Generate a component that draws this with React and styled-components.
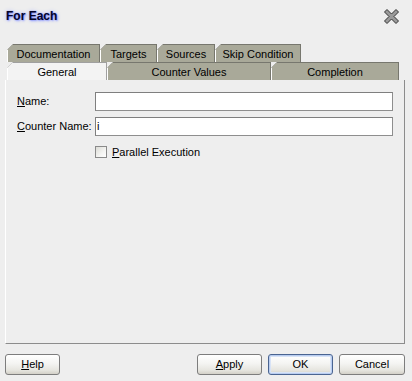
import React from "react";
import styled, { createGlobalStyle } from "styled-components";

const Global = createGlobalStyle`
  html, body { margin: 0; padding: 0; background: #eeeeee; }
  body { font-family: "Liberation Sans", Arial, sans-serif; font-size: 11px; color: #000; }
`;

const Dialog = styled.div`
  width: 412px;
  height: 381px;
  background: #eeeeee;
  display: flex;
  flex-direction: column;
  box-sizing: border-box;
`;

const TitleBar = styled.div`
  height: 44px;
  box-sizing: border-box;
  padding: 9px 13px 0 6px;
  display: flex;
  justify-content: space-between;
  align-items: flex-start;
`;

const Title = styled.div`
  font-size: 12px;
  font-weight: bold;
  color: #06062a;
  line-height: 14px;
  text-shadow: 0 0 1px #6f7cf0, 1px 1px 2px #8f9cff, 0 0 4px #b4bcff;
`;

const CloseBtn = styled.div`
  width: 15px;
  height: 15px;
  display: flex;
`;

const TabRows = styled.div`
  display: flex;
  flex-direction: column;
  padding-left: 7px;
`;

const TabRow = styled.div`
  display: flex;
  height: 18px;
`;

const TabOuter = styled.div`
  width: ${(p) => p.$w}px;
  height: 18px;
  box-sizing: border-box;
  padding: 1px 1px 0 0;
  background: ${(p) => (p.$active ? "#a0a0a0" : "#77776e")};
  clip-path: polygon(6px 0, 100% 0, 100% 100%, 0 100%, 0 6px);
  flex: none;
`;

const TabInner = styled.div`
  height: 100%;
  box-sizing: border-box;
  border-left: 1px solid #ffffff;
  background: ${(p) => (p.$active ? "#f3f3f3" : "#a9a999")};
  clip-path: polygon(5px 0, 100% 0, 100% 100%, 0 100%, 0 5px);
  display: flex;
  align-items: center;
  justify-content: center;
  line-height: 13px;
  padding-top: 1px;
  white-space: nowrap;
`;

const Panel = styled.div`
  margin: 0 7px 0 5px;
  height: 264px;
  box-sizing: border-box;
  background: #eeeeee;
  border-left: 1px solid #ffffff;
  border-right: 1px solid #8c8c8c;
  border-bottom: 1px solid #8c8c8c;
  padding: 12px 11px 0 11px;
`;

const Form = styled.div`
  display: grid;
  grid-template-columns: 78px 1fr;
  row-gap: 6px;
  align-items: center;
`;

const Label = styled.label`
  line-height: 19px;
  white-space: nowrap;
`;

const U = styled.span`
  text-decoration: underline;
`;

const Input = styled.div`
  height: 19px;
  box-sizing: border-box;
  background: #ffffff;
  border: 1px solid #7f7f7f;
  border-right-color: #8e8e8e;
  border-bottom-color: #8e8e8e;
  padding: 0 1px;
  line-height: 17px;
`;

const CheckRow = styled.div`
  grid-column: 2;
  display: flex;
  align-items: center;
  gap: 5px;
  margin-top: 3px;
  height: 13px;
`;

const CheckBox = styled.div`
  width: 12px;
  height: 12px;
  box-sizing: border-box;
  border: 1px solid #8a8a8a;
  background: linear-gradient(135deg, #dcdcd6 0%, #f4f4f2 60%, #ffffff 100%);
`;

const Footer = styled.div`
  display: flex;
  align-items: center;
  padding: 10px 7px 0 5px;
  gap: 6px;
`;

const Spacer = styled.div`
  flex: 1;
`;

const Button = styled.div`
  width: ${(p) => p.$w}px;
  height: 21px;
  box-sizing: border-box;
  border: 1px solid ${(p) => (p.$default ? "#4a6491" : "#7d7d7d")};
  border-radius: 3px;
  background: linear-gradient(180deg, #ffffff 0%, #f4f4f2 45%, #e6e5df 80%, #d3d0c8 100%);
  box-shadow: ${(p) => (p.$default ? "inset 0 0 0 1px #b9cdf0, inset 0 0 0 2px #d8e3f6" : "none")};
  display: flex;
  align-items: center;
  justify-content: center;
  line-height: 13px;
`;

const tabsRow1 = [
  ["Documentation", 93],
  ["Targets", 57],
  ["Sources", 58],
  ["Skip Condition", 86],
];
const tabsRow2 = [
  ["General", 100, true],
  ["Counter Values", 164],
  ["Completion", 128],
];

export default function App() {
  return (
    <>
      <Global />
      <Dialog>
        <TitleBar>
          <Title>For Each</Title>
          <CloseBtn>
            <svg width="15" height="15" viewBox="0 0 15 15">
              <polygon
                points="0.5,3 3,0.5 7.5,5 12,0.5 14.5,3 10,7.5 14.5,12 12,14.5 7.5,10 3,14.5 0.5,12 5,7.5"
                fill="#9a9a9a"
                stroke="#333333"
                strokeWidth="1"
                strokeLinejoin="round"
              />
            </svg>
          </CloseBtn>
        </TitleBar>
        <TabRows>
          <TabRow>
            {tabsRow1.map(([t, w]) => (
              <TabOuter key={t} $w={w}>
                <TabInner>{t}</TabInner>
              </TabOuter>
            ))}
          </TabRow>
          <TabRow>
            {tabsRow2.map(([t, w, a]) => (
              <TabOuter key={t} $w={w} $active={a}>
                <TabInner $active={a}>{t}</TabInner>
              </TabOuter>
            ))}
          </TabRow>
        </TabRows>
        <Panel>
          <Form>
            <Label>
              <U>N</U>ame:
            </Label>
            <Input />
            <Label>
              <U>C</U>ounter Name:
            </Label>
            <Input>i</Input>
            <CheckRow>
              <CheckBox />
              <span>
                <U>P</U>arallel Execution
              </span>
            </CheckRow>
          </Form>
        </Panel>
        <Footer>
          <Button $w={55}>
            <span>
              <U>H</U>elp
            </span>
          </Button>
          <Spacer />
          <Button $w={65}>
            <span>
              <U>A</U>pply
            </span>
          </Button>
          <Button $w={65} $default>
            OK
          </Button>
          <Button $w={66}>Cancel</Button>
        </Footer>
      </Dialog>
    </>
  );
}
